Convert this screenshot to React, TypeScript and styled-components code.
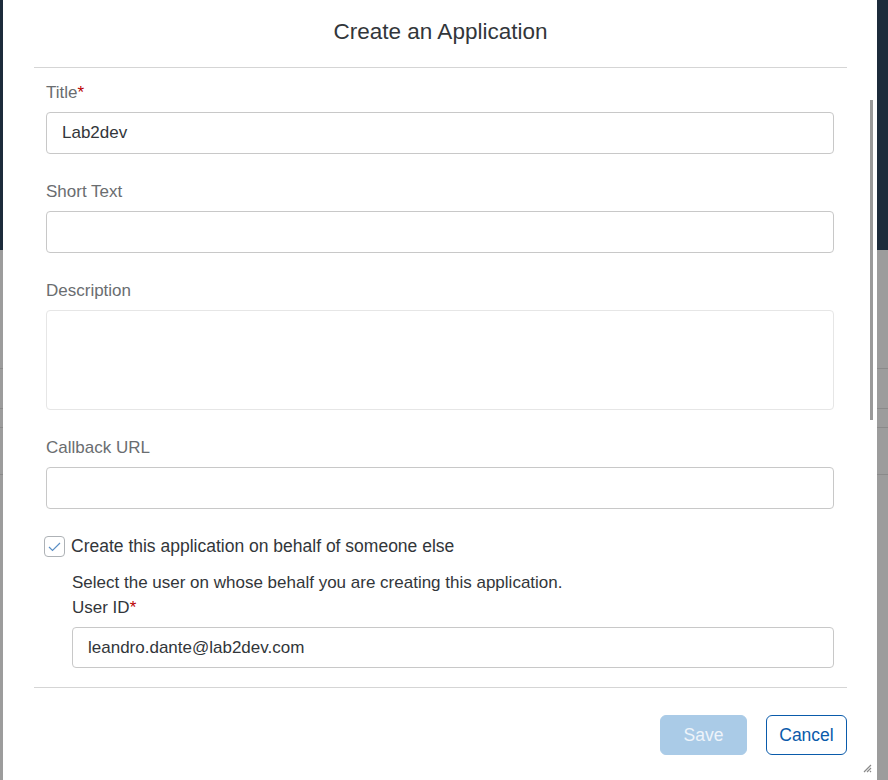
import React from "react";
import styled, { createGlobalStyle } from "styled-components";

const Global = createGlobalStyle`
  html, body { margin: 0; padding: 0; }
  body {
    width: 888px;
    height: 780px;
    overflow: hidden;
    font-family: "Liberation Sans", Arial, sans-serif;
    background: #9c9c9c;
  }
  * { box-sizing: border-box; }
`;

const Page = styled.div`
  position: relative;
  width: 888px;
  height: 780px;
  display: flex;
  flex-direction: column;
  background: #9c9c9c;
`;

const ShellBar = styled.div`
  height: 250px;
  background: #1d2b3b;
`;

const BgRow = styled.div<{ $h: number }>`
  height: ${(p) => p.$h}px;
  border-bottom: 1px solid #8a8a8a;
`;

const Dialog = styled.div`
  position: absolute;
  left: 3px;
  top: 0;
  width: 874px;
  height: 780px;
  background: #ffffff;
  display: flex;
  flex-direction: column;
  padding: 0 30px 0 31px;
`;

const Header = styled.div`
  height: 68px;
  flex: none;
  display: flex;
  align-items: center;
  justify-content: center;
  border-bottom: 1px solid #d5d5d5;
  padding-bottom: 3px;
`;

const Title = styled.h1`
  margin: 0;
  font-size: 22.5px;
  font-weight: 400;
  color: #32363a;
`;

const Content = styled.div`
  flex: 1;
  overflow: hidden;
  padding: 14px 13px 0 12px;
  display: flex;
  flex-direction: column;
`;

const Field = styled.div`
  display: flex;
  flex-direction: column;
  gap: 10px;
  margin-bottom: 27px;
`;

const Label = styled.label<{ $dark?: boolean }>`
  height: 20px;
  line-height: 22px;
  font-size: 17px;
  color: ${(p) => (p.$dark ? "#32363a" : "#6a6d70")};
`;

const Req = styled.span`
  color: #bb0000;
`;

const Input = styled.div<{ $h?: number; $light?: boolean }>`
  height: ${(p) => p.$h ?? 42}px;
  border: 1px solid ${(p) => (p.$light ? "#e6e6e6" : "#c8c8c8")};
  border-radius: 4px;
  background: #fff;
  padding: 0 15px;
  display: flex;
  align-items: center;
  font-size: 17px;
  color: #32363a;
`;

const CheckRow = styled.div`
  display: flex;
  align-items: center;
  gap: 6px;
  margin-left: -2px;
  height: 22px;
`;

const Box = styled.div`
  width: 21px;
  height: 21px;
  border: 1px solid #aeb2b6;
  border-radius: 4px;
  display: flex;
  align-items: center;
  justify-content: center;
`;

const CheckText = styled.span`
  font-size: 17.5px;
  color: #32363a;
`;

const Sub = styled.div`
  padding-left: 26px;
  margin-top: 15px;
  display: flex;
  flex-direction: column;
`;

const Help = styled.div`
  height: 20px;
  line-height: 22px;
  font-size: 17px;
  color: #32363a;
  margin-bottom: 5px;
`;

const Footer = styled.div`
  height: 93px;
  flex: none;
  border-top: 1px solid #d5d5d5;
  display: flex;
  justify-content: flex-end;
  align-items: flex-start;
  padding-top: 27px;
  gap: 19px;
`;

const Button = styled.button<{ $primary?: boolean }>`
  height: 40px;
  padding: 0;
  width: ${(p) => (p.$primary ? 87 : 81)}px;
  border-radius: 6px;
  font-family: inherit;
  font-size: 17.5px;
  border: 1px solid ${(p) => (p.$primary ? "#aacbe7" : "#0a5bab")};
  background: ${(p) => (p.$primary ? "#aacbe7" : "#ffffff")};
  color: ${(p) => (p.$primary ? "#eef4fa" : "#0a5bab")};
`;

const Thumb = styled.div`
  position: absolute;
  left: 867px;
  top: 100px;
  width: 3px;
  height: 320px;
  background: #9a9a9a;
`;

const Grip = styled.svg`
  position: absolute;
  left: 859px;
  top: 763px;
`;

export default function App() {
  return (
    <Page>
      <Global />
      <ShellBar />
      <BgRow $h={119} />
      <BgRow $h={40} />
      <BgRow $h={19} />
      <BgRow $h={47} />
      <Dialog>
        <Header>
          <Title>Create an Application</Title>
        </Header>
        <Content>
          <Field>
            <Label>
              Title<Req>*</Req>
            </Label>
            <Input>Lab2dev</Input>
          </Field>
          <Field>
            <Label>Short Text</Label>
            <Input />
          </Field>
          <Field>
            <Label>Description</Label>
            <Input $h={100} $light />
          </Field>
          <Field>
            <Label>Callback URL</Label>
            <Input />
          </Field>
          <CheckRow>
            <Box>
              <svg width="13" height="10" viewBox="0 0 13 10">
                <path d="M1 5 L4.5 8.5 L12 1" fill="none" stroke="#5b8fc4" strokeWidth="1.2" />
              </svg>
            </Box>
            <CheckText>Create this application on behalf of someone else</CheckText>
          </CheckRow>
          <Sub>
            <Help>Select the user on whose behalf you are creating this application.</Help>
            <Field>
              <Label $dark>
                User ID<Req>*</Req>
              </Label>
              <Input $h={41}>leandro.dante@lab2dev.com</Input>
            </Field>
          </Sub>
        </Content>
        <Footer>
          <Button $primary>Save</Button>
          <Button>Cancel</Button>
        </Footer>
        <Thumb />
        <Grip width="10" height="10" viewBox="0 0 10 10">
          <path d="M9 2 L2 9 M9 5 L5 9 M9 8 L8 9" stroke="#8a8a8a" strokeWidth="1.2" />
        </Grip>
      </Dialog>
    </Page>
  );
}
